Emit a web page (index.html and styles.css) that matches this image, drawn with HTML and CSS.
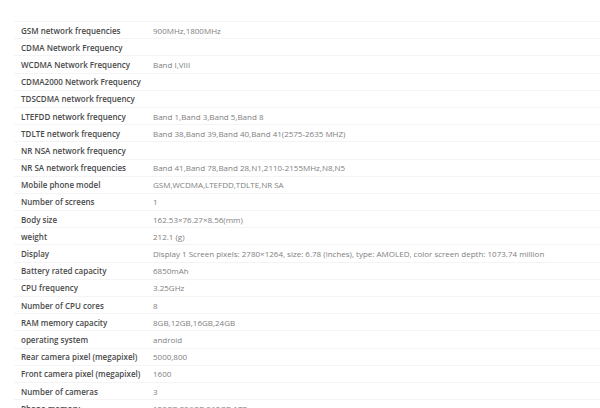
FILE: index.html
```html
<!DOCTYPE html>
<html lang="en">
<head>
    <meta charset="UTF-8">
    <meta name="viewport" content="width=device-width, initial-scale=1.0">
    <title>Specifications</title>
    <link rel="stylesheet" href="styles.css">
</head>
<body>
    <div class="container">
        <table class="spec-table">
            <tr><td class="label">GSM network frequencies</td><td class="value">900MHz,1800MHz</td></tr>
            <tr><td class="label">CDMA Network Frequency</td><td class="value"></td></tr>
            <tr><td class="label">WCDMA Network Frequency</td><td class="value">Band I,VIII</td></tr>
            <tr><td class="label">CDMA2000 Network Frequency</td><td class="value"></td></tr>
            <tr><td class="label">TDSCDMA network frequency</td><td class="value"></td></tr>
            <tr><td class="label">LTEFDD network frequency</td><td class="value">Band 1,Band 3,Band 5,Band 8</td></tr>
            <tr><td class="label">TDLTE network frequency</td><td class="value">Band 38,Band 39,Band 40,Band 41(2575-2635 MHZ)</td></tr>
            <tr><td class="label">NR NSA network frequency</td><td class="value"></td></tr>
            <tr><td class="label">NR SA network frequencies</td><td class="value">Band 41,Band 78,Band 28,N1,2110-2155MHz,N8,N5</td></tr>
            <tr><td class="label">Mobile phone model</td><td class="value">GSM,WCDMA,LTEFDD,TDLTE,NR SA</td></tr>
            <tr><td class="label">Number of screens</td><td class="value">1</td></tr>
            <tr><td class="label">Body size</td><td class="value">162.53×76.27×8.56(mm)</td></tr>
            <tr><td class="label">weight</td><td class="value">212.1 (g)</td></tr>
            <tr><td class="label">Display</td><td class="value">Display 1 Screen pixels: 2780×1264, size: 6.78 (inches), type: AMOLED, color screen depth: 1073.74 million</td></tr>
            <tr><td class="label">Battery rated capacity</td><td class="value">6850mAh</td></tr>
            <tr><td class="label">CPU frequency</td><td class="value">3.25GHz</td></tr>
            <tr><td class="label">Number of CPU cores</td><td class="value">8</td></tr>
            <tr><td class="label">RAM memory capacity</td><td class="value">8GB,12GB,16GB,24GB</td></tr>
            <tr><td class="label">operating system</td><td class="value">android</td></tr>
            <tr><td class="label">Rear camera pixel (megapixel)</td><td class="value">5000,800</td></tr>
            <tr><td class="label">Front camera pixel (megapixel)</td><td class="value">1600</td></tr>
            <tr><td class="label">Number of cameras</td><td class="value">3</td></tr>
            <tr><td class="label">Phone memory</td><td class="value">128GB,256GB,512GB,1TB</td></tr>
        </table>
    </div>
</body>
</html>
```

FILE: styles.css
```css
body {
    font-family: "Open Sans", Arial, sans-serif;
    margin: 0;
    padding: 0;
    background-color: #fff;
}
.container {
    padding: 21px 0 0 14px;
}
.spec-table {
    width: 586px;
    border-collapse: collapse;
    font-size: 8px;
}
.spec-table tr {
    height: 17.2px;
    border-top: 1px solid #f4f4f4;
}
.spec-table td {
    padding: 0 0 0 7px;
    white-space: nowrap;
    vertical-align: middle;
}
.label {
    width: 125px;
    color: #4a4a4a;
    font-weight: 600;
}
.value {
    color: #808080;
}
```
